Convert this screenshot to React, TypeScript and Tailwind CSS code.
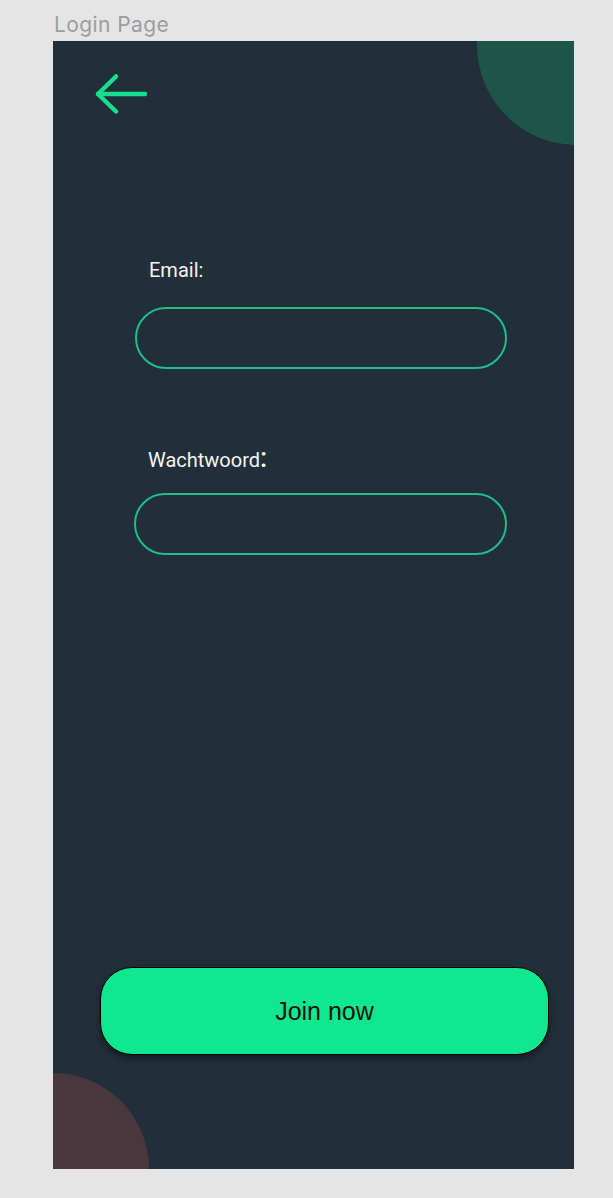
import React from "react";

export default function App() {
  return (
    <div className="w-full h-[1198px] bg-[#e5e5e5] overflow-hidden">
      <div
        className="ml-[54px] pt-[13px] h-[37px] text-[21px] leading-[24px] tracking-[0.4px] text-[#9d9d9d]"
        style={{ fontFamily: "Inter, 'Noto Sans', sans-serif" }}
      >
        Login Page
      </div>
      <div
        className="relative ml-[53px] mt-[4px] w-[521px] h-[1128px] bg-[#212f3a] overflow-hidden flex flex-col items-start"
        style={{ fontFamily: "Roboto, 'Noto Sans', sans-serif" }}
      >
        <div className="absolute left-[424px] top-[-96px] w-[200px] h-[200px] rounded-full bg-[#1e5549]" />
        <div className="absolute left-[-96px] top-[1032px] w-[192px] h-[192px] rounded-full bg-[#4a373e]" />

        <svg
          className="relative ml-[40px] mt-[31px]"
          width="56"
          height="44"
          viewBox="0 0 56 44"
          fill="none"
          stroke="#16df8d"
          strokeWidth="4.5"
          strokeLinecap="round"
          strokeLinejoin="round"
        >
          <path d="M52 22H5" />
          <path d="M23 4.5L5 22L23 39.5" />
        </svg>

        <div className="relative ml-[96px] mt-[142px] h-6 text-[20px] leading-[24px] text-[#f4f4f4]">
          Email:
        </div>
        <div className="relative ml-[82px] mt-[25px] w-[372px] h-[62px] rounded-full border-2 border-[#20bf85]" />

        <div className="relative ml-[95px] mt-[79px] h-6 text-[20px] leading-[24px] text-[#f4f4f4] whitespace-nowrap">
          Wachtwoord<span className="text-[27px] leading-[0] font-medium">:</span>
        </div>
        <div className="relative ml-[81px] mt-[21px] w-[373px] h-[62px] rounded-full border-2 border-[#20bf85]" />

        <button
          className="relative ml-[47px] mt-[412px] w-[449px] h-[88px] rounded-[32px] bg-[#0fe88f] border border-black shadow-[0_4px_6px_rgba(0,0,0,0.4)] flex items-center justify-center text-[25px] text-[#111] pt-[1px]"
          style={{ fontFamily: "'Liberation Sans', Arial, sans-serif" }}
        >
          Join now
        </button>
      </div>
    </div>
  );
}
